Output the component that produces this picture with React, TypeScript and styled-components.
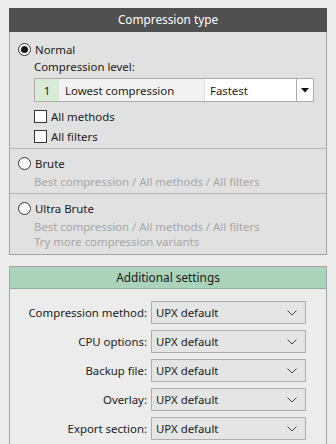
import styled, { createGlobalStyle } from "styled-components";

const GlobalStyle = createGlobalStyle`
html, body {
    margin: 0;
    padding: 0;
    background: #ececec;
    font-family: "Noto Sans", "Open Sans", sans-serif;
    font-size: 11.4px;
    color: #1a1a1a;
}
`;

const settings = [
    "Compression method:",
    "CPU options:",
    "Backup file:",
    "Overlay:",
    "Export section:"
];

function Radio({ checked, label }: { checked?: boolean; label: string }) {
    return (
        <RadioRow>
            <RadioCircle $checked={!!checked} />
            <span>{label}</span>
        </RadioRow>
    );
}

function Checkbox({ label }: { label: string }) {
    return (
        <CheckRow>
            <CheckBox />
            <span>{label}</span>
        </CheckRow>
    );
}

export default function App() {
    return (
        <Page>
            <GlobalStyle />
            <Panel>
                <DarkHeader>Compression type</DarkHeader>
                <Section $height={117} $top={8}>
                    <Radio checked label="Normal" />
                    <Indent>
                        <Label>Compression level:</Label>
                        <Combo>
                            <LevelNum>1</LevelNum>
                            <LevelName>Lowest compression</LevelName>
                            <LevelSpeed>Fastest</LevelSpeed>
                            <ComboArrow>
                                <svg width="8" height="5" viewBox="0 0 8 5">
                                    <path d="M0 0h8L4 4.5z" fill="#111" />
                                </svg>
                            </ComboArrow>
                        </Combo>
                        <Checks>
                            <Checkbox label="All methods" />
                            <Checkbox label="All filters" />
                        </Checks>
                    </Indent>
                </Section>
                <Section $height={45} $top={5}>
                    <Radio label="Brute" />
                    <Indent>
                        <Hint $line={16}>Best compression / All methods / All filters</Hint>
                    </Indent>
                </Section>
                <Section $height={60} $top={5} $last>
                    <Radio label="Ultra Brute" />
                    <Indent>
                        <Hint $line={15}>Best compression / All methods / All filters</Hint>
                        <Hint $line={15}>Try more compression variants</Hint>
                    </Indent>
                </Section>
            </Panel>
            <Panel $open>
                <GreenHeader>Additional settings</GreenHeader>
                <SettingsGrid>
                    {settings.map((s) => (
                        <SettingRow key={s}>
                            <SettingLabel>{s}</SettingLabel>
                            <Select>
                                <span>UPX default</span>
                                <svg width="10" height="6" viewBox="0 0 10 6">
                                    <path d="M0.5 0.5L5 5L9.5 0.5" fill="none" stroke="#444" strokeWidth="1" />
                                </svg>
                            </Select>
                        </SettingRow>
                    ))}
                </SettingsGrid>
            </Panel>
        </Page>
    );
}

const Page = styled('div')`
padding: 8px 9px 0;
display: flex;
flex-direction: column;
row-gap: 11px;
height: 436px;
overflow: hidden;
`;

const Panel = styled('div')<{ $open?: boolean }>`
border: 1px solid #a3a3a3;
border-bottom: ${props => props.$open ? 'none' : '1px solid #a3a3a3'};
background: ${props => props.$open ? '#ececec' : '#e1e1e1'};
flex-shrink: 0;
${props => props.$open && 'flex: 1;'}
`;

const DarkHeader = styled('div')`
height: 24px;
line-height: 23px;
background: #505050;
color: #ffffff;
text-align: center;
font-size: 11.8px;
margin: -1px -1px 0;
`;

const GreenHeader = styled('div')`
height: 21px;
line-height: 21px;
background: #abd2bb;
border-bottom: 1px solid #8fb39e;
color: #1a1a1a;
text-align: center;
font-size: 11.8px;
`;

const Section = styled('div')<{ $height: number; $top: number; $last?: boolean }>`
height: ${props => props.$height}px;
box-sizing: border-box;
padding: ${props => props.$top}px 0 0 8px;
border-bottom: ${props => props.$last ? 'none' : '1px solid #b4b4b4'};
`;

const RadioRow = styled('div')`
display: flex;
align-items: center;
column-gap: 4px;
height: 19px;
`;

const RadioCircle = styled('span')<{ $checked: boolean }>`
width: 13px;
height: 13px;
flex-shrink: 0;
box-sizing: border-box;
border-radius: 50%;
border: 1px solid #333;
background: #ffffff;
display: flex;
align-items: center;
justify-content: center;

&::after {
    content: "";
    display: ${props => props.$checked ? 'block' : 'none'};
    width: 7px;
    height: 7px;
    border-radius: 50%;
    background: #1a1a1a;
}
`;

const Indent = styled('div')`
padding-left: 16px;
display: flex;
flex-direction: column;
`;

const Label = styled('div')`
line-height: 16px;
`;

const Hint = styled('div')<{ $line: number }>`
color: #a6a6a6;
line-height: ${props => props.$line}px;
height: ${props => props.$line}px;
white-space: nowrap;
&:first-child {
    margin-top: 1px;
}
`;

const Combo = styled('div')`
margin-top: 3px;
width: 280px;
height: 24px;
box-sizing: border-box;
border: 1px solid #ababab;
background: #ffffff;
display: flex;
align-items: stretch;
`;

const LevelNum = styled('div')`
width: 24px;
background: #d9ead9;
display: flex;
align-items: center;
justify-content: center;
`;

const LevelName = styled('div')`
width: 139px;
padding-left: 6px;
background: #f2f2f2;
display: flex;
align-items: center;
border-right: 1px solid #e2e2e2;
`;

const LevelSpeed = styled('div')`
flex: 1;
padding-left: 5px;
display: flex;
align-items: center;
border-right: 1px solid #ababab;
`;

const ComboArrow = styled('div')`
width: 16px;
display: flex;
align-items: center;
justify-content: center;
`;

const Checks = styled('div')`
margin-top: 4px;
display: flex;
flex-direction: column;
`;

const CheckRow = styled('div')`
display: flex;
align-items: center;
column-gap: 4px;
height: 20px;
`;

const CheckBox = styled('span')`
width: 13px;
height: 13px;
flex-shrink: 0;
box-sizing: border-box;
border: 1px solid #333;
background: #ffffff;
`;

const SettingsGrid = styled('div')`
padding-top: 12px;
display: flex;
flex-direction: column;
row-gap: 6px;
`;

const SettingRow = styled('div')`
display: grid;
grid-template-columns: 137px 155px;
column-gap: 4px;
align-items: center;
`;

const SettingLabel = styled('div')`
text-align: right;
white-space: nowrap;
`;

const Select = styled('div')`
height: 23px;
box-sizing: border-box;
border: 1px solid #adadad;
background: #e5e5e5;
padding: 0 8px 0 4px;
display: flex;
align-items: center;
justify-content: space-between;
`;
